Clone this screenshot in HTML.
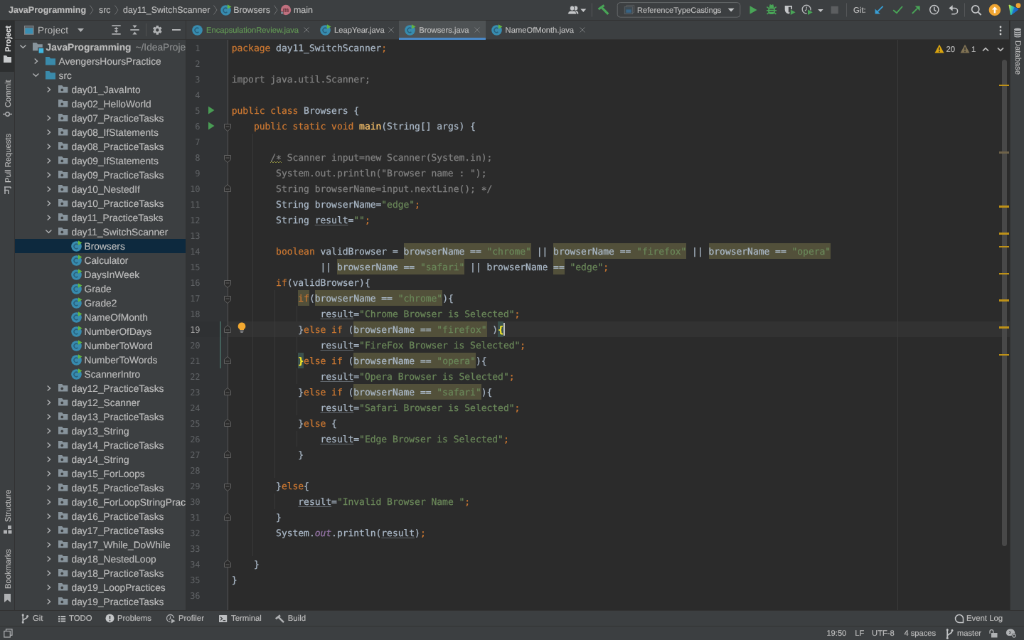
<!DOCTYPE html>
<html lang="en"><head><meta charset="utf-8"><title>JavaProgramming - Browsers.java</title>
<style>
*{box-sizing:border-box}
html,body{margin:0;padding:0;width:1024px;height:640px;overflow:hidden;background:#3c3f41}
#app{text-rendering:geometricPrecision;position:absolute;left:0;top:0;width:1440px;height:900px;transform:scale(0.711111);transform-origin:0 0;will-change:transform;background:#3c3f41;overflow:hidden;font-family:"Liberation Sans",sans-serif;font-size:13px;color:#bbbbbb}
.abs{position:absolute}
svg{position:absolute;overflow:visible}
.t{position:absolute;white-space:pre;line-height:1}
/* nav */
#nav{position:absolute;left:0;top:0;width:1440px;height:29px;background:#3c3f41;border-bottom:1px solid #323232}
.bc{-webkit-text-stroke:.18px;position:absolute;top:7px;font-size:12.4px;line-height:14px;white-space:pre;color:#bbbbbb}
.sepv{position:absolute;width:1px;background:#555555}
/* stripes */
#ls{position:absolute;left:0;top:28px;width:21px;height:830px;background:#3c3f41;border-right:1px solid #323232}
#rs{position:absolute;left:1419.5px;top:28px;width:21px;height:830px;background:#3c3f41;border-left:1px solid #323232}
.vt{position:absolute;white-space:pre;font-size:11.2px;line-height:12px;transform-origin:0 0;color:#bbbbbb;-webkit-text-stroke:0.15px}
/* project */
#proj{position:absolute;left:21px;top:28px;width:240px;height:830px;background:#3c3f41;overflow:hidden}
#projh{position:absolute;left:0;top:0;width:240px;height:28px}
.row{-webkit-text-stroke:.18px;position:absolute;left:0;width:240px;height:20px;white-space:pre;font-size:13.75px;line-height:20px;color:#bbbbbb}
.row .tx{position:absolute;top:1.1px}
/* editor */
#ed{position:absolute;left:261px;top:28px;width:1158.5px;height:830px;background:#2b2b2b;border-left:1px solid #323232;overflow:hidden}
#tabs{position:absolute;left:0;top:0;width:1157px;height:28px;background:#3c3f41;border-bottom:1px solid #323232}
.tab{-webkit-text-stroke:.18px;position:absolute;top:0.8px;height:28px;font-size:11.2px;line-height:28px;white-space:pre;color:#bbbbbb}
#gut{position:absolute;left:0;top:28px;width:58px;height:802px;background:#313335}
#foldline{position:absolute;left:58px;top:28px;width:1px;height:802px;background:#555555}
.ln{position:absolute;left:0;width:19.4px;text-align:right;font-family:"DejaVu Sans Mono","Liberation Mono",monospace;font-size:12px;letter-spacing:-0.1px;line-height:22px;height:22px;color:#606366;white-space:pre}
#code{position:absolute;left:63.7px;top:29.7px;font-family:"DejaVu Sans Mono","Liberation Mono",monospace;font-size:13px;letter-spacing:-0.027px;line-height:22px;color:#a9b7c6;white-space:pre;-webkit-text-stroke:0.25px}
.cl{position:absolute;left:0;height:22px;white-space:pre}
.ast{position:relative;top:2.2px}
.k{color:#cc7832}.s{color:#6a8759}.c{color:#808080}.m{color:#ffc66d}.f{color:#9876aa;font-style:italic}
.u{text-decoration:underline;text-decoration-thickness:1px;text-underline-offset:2.2px;text-decoration-color:rgba(169,183,198,.42)}
.w{background:#52503a;padding:4.9px 0 2px}
.br{background:#3b514d;color:#ffef28;font-weight:bold;padding:4.9px 0 2px}
/* bottom */
#bs{position:absolute;left:0;top:858px;width:1440px;height:22px;background:#3c3f41;border-top:1px solid #323232}
#st{position:absolute;left:0;top:880px;width:1440px;height:20px;background:#3c3f41;border-top:1px solid #323232}
.bt{-webkit-text-stroke:.18px;position:absolute;top:4px;font-size:11.35px;line-height:14px;white-space:pre;color:#bbbbbb}
.stt{-webkit-text-stroke:.18px;position:absolute;top:3.2px;font-size:11.15px;line-height:14px;white-space:pre;color:#bbbbbb}
</style></head>
<body>
<div id="app">
<div id="nav">
<span class="bc" style="left:12px;font-weight:bold;font-size:12.5px">JavaProgramming</span><svg style="left:125px;top:6px" width="8" height="16" viewBox="0 0 8 16"><path d="M1.5 1.5 L6 8 L1.5 14.5" fill="none" stroke="#6e7072" stroke-width="1"/></svg><span class="bc" style="left:139px">src</span><svg style="left:160px;top:6px" width="8" height="16" viewBox="0 0 8 16"><path d="M1.5 1.5 L6 8 L1.5 14.5" fill="none" stroke="#6e7072" stroke-width="1"/></svg><span class="bc" style="left:173px">day11_SwitchScanner</span><svg style="left:298.5px;top:6px" width="8" height="16" viewBox="0 0 8 16"><path d="M1.5 1.5 L6 8 L1.5 14.5" fill="none" stroke="#6e7072" stroke-width="1"/></svg><svg style="left:309.5px;top:5.5px" width="16" height="16" viewBox="0 0 16 16"><circle cx="7.5" cy="8.5" r="7.3" fill="#388caf"/><path d="M9.4 10.9 A3.2 3.2 0 1 1 9.4 6.1" fill="none" stroke="#29617d" stroke-width="1.5"/><path d="M9.9 0.3 L15.5 3.5 L9.9 6.7 Z" fill="#62b543"/></svg><span class="bc" style="left:328.3px">Browsers</span><svg style="left:384.3px;top:6px" width="8" height="16" viewBox="0 0 8 16"><path d="M1.5 1.5 L6 8 L1.5 14.5" fill="none" stroke="#6e7072" stroke-width="1"/></svg><svg style="left:393.7px;top:6px" width="16" height="16" viewBox="0 0 16 16"><circle cx="8" cy="8" r="7.2" fill="#c0707e"/><text x="8" y="11.3" font-family="Liberation Sans,sans-serif" font-size="9.5" font-weight="bold" text-anchor="middle" fill="#5a2f37">m</text><path d="M2.6 9.6 L5.2 12.2 L2.6 14.8 L0 12.2 Z" fill="#3c3f41"/><path d="M2.6 10.6 L4.2 12.2 L2.6 13.8 L1 12.2 Z" fill="#9fb4c4"/></svg><span class="bc" style="left:413px">main</span>
<svg style="left:0;top:0" width="1440" height="28" viewBox="0 0 1440 28"><g fill="#c4c6c8"><circle cx="809.3" cy="11.4" r="3"/><path d="M805 19.6 C805 16.6 806.5 15.3 809.3 15.3 C812 15.3 813.4 16.6 813.4 19.6 Z"/></g><g fill="#c4c6c8" stroke="#3c3f41" stroke-width="1"><path d="M798.6 20.1 C798.6 16.2 800.8 14.9 804.6 14.9 C808.4 14.9 810.6 16.2 810.6 20.1 Z"/><ellipse cx="804.6" cy="11.6" rx="3.3" ry="3.7"/></g><path d="M816.3 12.6 H824.3 L820.3 17 Z" fill="#c4c6c8"/><rect x="831.8" y="4.4" width="1" height="19.2" fill="#555759"/><path d="M841.6 13 L849.5 7.5" stroke="#49a557" stroke-width="3.2" fill="none"/><path d="M846 10.4 L855.3 19.8" stroke="#49a557" stroke-width="3.2" fill="none"/><rect x="868.2" y="3.6" width="172.6" height="20.6" rx="4" ry="4" fill="none" stroke="#646769" stroke-width="1"/><path d="M881 9 V7.4 H891.8 V17.4 H890.2" fill="none" stroke="#585c5f" stroke-width="1"/><rect x="878.3" y="9.6" width="11.4" height="10" fill="#3e4a52" stroke="#5a5f63" stroke-width="1"/><rect x="880.4" y="13.4" width="7.2" height="4.4" fill="#386485"/><path d="M1023.6 11.8 H1032.6 L1028.1 16.6 Z" fill="#c4c6c8"/><path d="M1054.5 8.3 L1064.6 14 L1054.5 19.7 Z" fill="#49a557"/><g fill="#49a557"><ellipse cx="1085" cy="9.3" rx="3.2" ry="2.6"/><rect x="1080.2" y="10" width="9.6" height="10" rx="3.6" ry="3.8"/></g><path d="M1078.4 9.6 L1081 11.6 M1091.6 9.6 L1089 11.6 M1078 14.8 H1081 M1092 14.8 H1089 M1078.6 19.8 L1081 17.8 M1091.4 19.8 L1089 17.8 M1082.6 6.4 L1083.6 7.6 M1087.4 6.4 L1086.4 7.6" stroke="#49a557" stroke-width="1.5" fill="none"/><path d="M1082 13.2 H1088 M1082 16.4 H1088" stroke="#3c3f41" stroke-width="1.3"/><path d="M1103.7 8 H1113.9 V13.4 C1113.9 16.6 1111.6 18.6 1108.8 19.6 C1106 18.6 1103.7 16.6 1103.7 13.4 Z" fill="#c4c6c8"/><path d="M1108.8 9.8 H1112.1 V13.4 C1112.1 15.4 1110.8 16.8 1108.8 17.6 Z" fill="#3c3f41"/><path d="M1110.4 11.6 L1120.4 17.2 L1110.4 22.8 Z" fill="#3c3f41"/><path d="M1111.8 13.6 L1118.6 17.3 L1111.8 21 Z" fill="#49a557"/><circle cx="1134.1" cy="13.1" r="5.9" fill="none" stroke="#b4b6b8" stroke-width="1.4"/><path d="M1134.3 9.4 V13.2 L1132 15.2" fill="none" stroke="#b4b6b8" stroke-width="1.3"/><path d="M1134.6 11.6 L1144.6 17.2 L1134.6 22.8 Z" fill="#3c3f41"/><path d="M1136 13.6 L1142.8 17.3 L1136 21 Z" fill="#49a557"/><path d="M1150.1 12.9 H1157.7 L1153.9 17 Z" fill="#c4c6c8"/><rect x="1168.7" y="8.8" width="10.1" height="10.5" fill="#5c5e60"/><rect x="1190" y="4.4" width="1" height="19.2" fill="#555759"/><path d="M1241.6 8.8 L1234 16.4" stroke="#389fd6" stroke-width="1.9" fill="none"/><path d="M1230.6 12.6 L1237.8 19.6 H1230.6 Z" fill="#389fd6"/><path d="M1256.2 14.2 L1261 18.2 L1269 9" stroke="#49a557" stroke-width="1.9" fill="none"/><path d="M1282.8 19 L1290 11.8" stroke="#49a557" stroke-width="1.9" fill="none"/><path d="M1286.6 8.4 H1293.6 V15.4 Z" fill="#49a557"/><circle cx="1313.8" cy="13.6" r="6.1" fill="none" stroke="#c4c6c8" stroke-width="1.5"/><path d="M1313.8 9.8 V13.8 L1316.6 16" fill="none" stroke="#c4c6c8" stroke-width="1.5"/><path d="M1337 11.4 H1342.4 A4.2 4.2 0 0 1 1342.4 19.8 H1338.2" fill="none" stroke="#c4c6c8" stroke-width="1.5"/><path d="M1334.4 11.4 L1339.6 7.2 V15.6 Z" fill="#c4c6c8"/><rect x="1356" y="4.4" width="1" height="19.2" fill="#555759"/><circle cx="1371.7" cy="13" r="5.1" fill="none" stroke="#c4c6c8" stroke-width="1.7"/><path d="M1375.6 17.1 L1379.6 21" stroke="#c4c6c8" stroke-width="2"/><circle cx="1398.9" cy="14" r="8.3" fill="#f0a532"/><path d="M1394.9 13.6 L1398.9 9.4 L1402.9 13.6 Z" fill="#fff"/><rect x="1397.7" y="13" width="2.4" height="5.4" fill="#fff"/><defs><linearGradient id="sg" x1="0" y1="0" x2="1" y2="0.25"><stop offset="0" stop-color="#d6e83c"/><stop offset="0.35" stop-color="#3fd0a0"/><stop offset="0.7" stop-color="#1f8fd8"/><stop offset="1" stop-color="#1b5fc8"/></linearGradient></defs><path d="M1418.6 7.6 Q1418.4 6.4 1419.8 6.8 L1431.6 12.2 Q1432.8 12.9 1431.8 13.8 L1422.6 20.8 Q1421.2 21.6 1420.8 20.2 Z" fill="url(#sg)"/><path d="M1426.5 10 L1431.6 12.2 Q1432.8 12.9 1431.8 13.8 L1422.6 20.8 Q1424.5 15 1426.5 10 Z" fill="#1a62c9" fill-opacity=".75"/><circle cx="1432" cy="7.7" r="3.4" fill="#f0a532"/></svg><span class="bc" style="left:896px;top:7.9px;font-size:11.1px">ReferenceTypeCastings</span><span class="bc" style="left:1200px;top:7.7px;font-size:11.4px">Git:</span></div>
<div id="ls">
<div class="abs" style="left:0;top:0;width:20px;height:73px;background:#2d2f30"></div><span class="vt" style="left:5.6px;top:44.5px;transform:rotate(-90deg);font-weight:bold;font-size:10.9px;color:#e0e0e0">Project</span><svg style="left:4px;top:49px" width="13" height="12" viewBox="0 0 13 12"><path d="M1 1 H5 L6.5 3 H12 V11 H1 Z" fill="#c7c9cb"/></svg><span class="vt" style="left:5.6px;top:123px;transform:rotate(-90deg);color:#bbbbbb">Commit</span><svg style="left:4px;top:126px" width="13" height="13" viewBox="0 0 13 13"><circle cx="6.5" cy="6.5" r="2.8" fill="none" stroke="#afb1b3" stroke-width="1.4"/><path d="M0 6.5 H3.5 M9.5 6.5 H13" stroke="#afb1b3" stroke-width="1.4"/></svg><span class="vt" style="left:5.6px;top:229px;transform:rotate(-90deg);color:#bbbbbb">Pull Requests</span><svg style="left:4px;top:233px" width="13" height="13" viewBox="0 0 13 13"><path d="M2 2 H11 M2 6.5 H8 M3 2 V12 M8 6.5 V12 M11 2 V4" stroke="#afb1b3" stroke-width="1.5" fill="none"/></svg><span class="vt" style="left:5.6px;top:706px;transform:rotate(-90deg);color:#bbbbbb">Structure</span><svg style="left:4px;top:710px" width="13" height="13" viewBox="0 0 13 13"><rect x="7" y="1" width="5" height="5" fill="#afb1b3"/><rect x="1" y="7.5" width="5" height="5" fill="#afb1b3"/><rect x="7.5" y="7.5" width="5" height="5" fill="#afb1b3"/></svg><span class="vt" style="left:5.6px;top:800px;transform:rotate(-90deg);color:#bbbbbb">Bookmarks</span><svg style="left:4px;top:806px" width="13" height="14" viewBox="0 0 13 14"><path d="M2 1 H11 V13 L6.5 9.5 L2 13 Z" fill="#afb1b3"/></svg></div>
<div id="rs">
<svg style="left:4.5px;top:11px" width="12" height="14" viewBox="0 0 12 14"><ellipse cx="6" cy="2.5" rx="5" ry="2" fill="#afb1b3"/><path d="M1 4.2 C1 6.8 11 6.8 11 4.2 V6 C11 8.6 1 8.6 1 6 Z M1 7.2 C1 9.8 11 9.8 11 7.2 V9 C11 11.6 1 11.6 1 9 Z M1 10.2 C1 12.8 11 12.8 11 10.2 V11.5 C11 14.2 1 14.2 1 11.5 Z" fill="#afb1b3"/></svg><span class="vt" style="left:16.5px;top:29px;transform:rotate(90deg);color:#bbbbbb">Database</span></div>
<div id="proj">
<div id="projh"><svg style="left:13.2px;top:8.2px" width="13.6" height="12.8" viewBox="0 0 13.6 12.8"><rect x="0" y="0" width="13.6" height="12.8" fill="#7f8589"/><rect x="1" y="1" width="11.6" height="2.2" fill="#5a6065"/><rect x="1.3" y="3.6" width="11" height="7.9" fill="#3a8fb3"/></svg><span class="t" style="left:32px;top:7px;font-size:13.6px;line-height:15px;letter-spacing:.12px">Project</span><svg style="left:88px;top:12px" width="9" height="6" viewBox="0 0 9 6"><path d="M0 0 H9 L4.5 5 Z" fill="#afb1b3"/></svg><svg style="left:135.6px;top:7.1px" width="13" height="14" viewBox="0 0 13 14"><g fill="#afb1b3"><rect x=".3" y=".3" width="12.4" height="1.7"/><rect x=".3" y="12" width="12.4" height="1.7"/><path d="M6.5 2.9 L9.7 6 H3.3 Z M3.3 8 H9.7 L6.5 11.1 Z"/><rect x="5.8" y="5.8" width="1.4" height="2.4"/></g></svg><svg style="left:161.6px;top:7.1px" width="13" height="14" viewBox="0 0 13 14"><g fill="#afb1b3"><rect x=".3" y="6.15" width="12.4" height="1.7"/><path d="M3.4 .6 H9.6 L6.5 4.5 Z M6.5 9.5 L9.6 13.4 H3.4 Z"/></g></svg><div class="sepv" style="left:184px;top:5px;height:18px;background:#515151"></div><svg style="left:193.2px;top:6.8px" width="14.6" height="14.6" viewBox="0 0 16 16"><g fill="#afb1b3"><circle cx="8" cy="8" r="5.2"/><g><rect x="6.1" y="1" width="3.8" height="14" rx=".5"/><rect x="6.1" y="1" width="3.8" height="14" rx=".5" transform="rotate(60 8 8)"/><rect x="6.1" y="1" width="3.8" height="14" rx=".5" transform="rotate(120 8 8)"/></g></g><circle cx="8" cy="8" r="2.4" fill="#3c3f41"/></svg><div class="abs" style="left:0;top:26.9px;width:240px;height:1px;background:#323232"></div><div class="abs" style="left:220.6px;top:13px;width:12.4px;height:2px;background:#afb1b3"></div></div>
<div class="row" style="top:28.1px;"><svg style="left:7.1px;top:7.0px" width="8.8" height="4.8" viewBox="0 0 8.8 4.8"><path d="M.4 .5 L4.4 4.2 L8.4 .5" fill="none" stroke="#afb1b3" stroke-width="1.4"/></svg><svg style="left:25.2px;top:3.9px" width="16" height="15" viewBox="0 0 16 15"><path d="M0 0 H5.4 L7.2 2.2 H13.8 V11.2 H0 Z" fill="#87939b"/><rect x="7.4" y="6.6" width="8.6" height="8.4" fill="#3c3f41"/><rect x="8.6" y="7.8" width="6.6" height="6.8" fill="#40b6e0"/></svg><span class="tx" style="left:43.5px;font-weight:bold">JavaProgramming</span><span class="tx" style="left:169.5px;color:#8a8c8d">~/IdeaProjects/JavaProgramming</span></div>
<div class="row" style="top:48.1px;"><svg style="left:26.8px;top:5.8px" width="5.4" height="8" viewBox="0 0 5.4 8"><path d="M.7 .4 L4.6 4 L.7 7.6" fill="none" stroke="#afb1b3" stroke-width="1.4"/></svg><svg style="left:42.8px;top:3.7px" width="14" height="11.6" viewBox="0 0 14 11.6"><path d="M0 0 H5.4 L7.2 2.2 H14 V11.6 H0 Z" fill="#3a8aaa"/></svg><span class="tx" style="left:61.5px">AvengersHoursPractice</span></div>
<div class="row" style="top:68.1px;"><svg style="left:25.1px;top:7.0px" width="8.8" height="4.8" viewBox="0 0 8.8 4.8"><path d="M.4 .5 L4.4 4.2 L8.4 .5" fill="none" stroke="#afb1b3" stroke-width="1.4"/></svg><svg style="left:42.8px;top:3.7px" width="14" height="11.6" viewBox="0 0 14 11.6"><path d="M0 0 H5.4 L7.2 2.2 H14 V11.6 H0 Z" fill="#3a8aaa"/></svg><span class="tx" style="left:61.5px">src</span></div>
<div class="row" style="top:88.1px;"><svg style="left:44.8px;top:5.8px" width="5.4" height="8" viewBox="0 0 5.4 8"><path d="M.7 .4 L4.6 4 L.7 7.6" fill="none" stroke="#afb1b3" stroke-width="1.4"/></svg><svg style="left:61.1px;top:4.0px" width="13.4" height="10.6" viewBox="0 0 13.4 10.6"><path d="M0 0 H5.2 L6.9 2 H13.4 V10.6 H0 Z" fill="#87939b"/><circle cx="5.3" cy="6.4" r="1.9" fill="#3c3f41"/></svg><span class="tx" style="left:79.5px">day01_JavaInto</span></div>
<div class="row" style="top:108.1px;"><svg style="left:61.1px;top:4.0px" width="13.4" height="10.6" viewBox="0 0 13.4 10.6"><path d="M0 0 H5.2 L6.9 2 H13.4 V10.6 H0 Z" fill="#87939b"/><circle cx="5.3" cy="6.4" r="1.9" fill="#3c3f41"/></svg><span class="tx" style="left:79.5px">day02_HelloWorld</span></div>
<div class="row" style="top:128.1px;"><svg style="left:44.8px;top:5.8px" width="5.4" height="8" viewBox="0 0 5.4 8"><path d="M.7 .4 L4.6 4 L.7 7.6" fill="none" stroke="#afb1b3" stroke-width="1.4"/></svg><svg style="left:61.1px;top:4.0px" width="13.4" height="10.6" viewBox="0 0 13.4 10.6"><path d="M0 0 H5.2 L6.9 2 H13.4 V10.6 H0 Z" fill="#87939b"/><circle cx="5.3" cy="6.4" r="1.9" fill="#3c3f41"/></svg><span class="tx" style="left:79.5px">day07_PracticeTasks</span></div>
<div class="row" style="top:148.1px;"><svg style="left:44.8px;top:5.8px" width="5.4" height="8" viewBox="0 0 5.4 8"><path d="M.7 .4 L4.6 4 L.7 7.6" fill="none" stroke="#afb1b3" stroke-width="1.4"/></svg><svg style="left:61.1px;top:4.0px" width="13.4" height="10.6" viewBox="0 0 13.4 10.6"><path d="M0 0 H5.2 L6.9 2 H13.4 V10.6 H0 Z" fill="#87939b"/><circle cx="5.3" cy="6.4" r="1.9" fill="#3c3f41"/></svg><span class="tx" style="left:79.5px">day08_IfStatements</span></div>
<div class="row" style="top:168.1px;"><svg style="left:44.8px;top:5.8px" width="5.4" height="8" viewBox="0 0 5.4 8"><path d="M.7 .4 L4.6 4 L.7 7.6" fill="none" stroke="#afb1b3" stroke-width="1.4"/></svg><svg style="left:61.1px;top:4.0px" width="13.4" height="10.6" viewBox="0 0 13.4 10.6"><path d="M0 0 H5.2 L6.9 2 H13.4 V10.6 H0 Z" fill="#87939b"/><circle cx="5.3" cy="6.4" r="1.9" fill="#3c3f41"/></svg><span class="tx" style="left:79.5px">day08_PracticeTasks</span></div>
<div class="row" style="top:188.1px;"><svg style="left:44.8px;top:5.8px" width="5.4" height="8" viewBox="0 0 5.4 8"><path d="M.7 .4 L4.6 4 L.7 7.6" fill="none" stroke="#afb1b3" stroke-width="1.4"/></svg><svg style="left:61.1px;top:4.0px" width="13.4" height="10.6" viewBox="0 0 13.4 10.6"><path d="M0 0 H5.2 L6.9 2 H13.4 V10.6 H0 Z" fill="#87939b"/><circle cx="5.3" cy="6.4" r="1.9" fill="#3c3f41"/></svg><span class="tx" style="left:79.5px">day09_IfStatements</span></div>
<div class="row" style="top:208.1px;"><svg style="left:44.8px;top:5.8px" width="5.4" height="8" viewBox="0 0 5.4 8"><path d="M.7 .4 L4.6 4 L.7 7.6" fill="none" stroke="#afb1b3" stroke-width="1.4"/></svg><svg style="left:61.1px;top:4.0px" width="13.4" height="10.6" viewBox="0 0 13.4 10.6"><path d="M0 0 H5.2 L6.9 2 H13.4 V10.6 H0 Z" fill="#87939b"/><circle cx="5.3" cy="6.4" r="1.9" fill="#3c3f41"/></svg><span class="tx" style="left:79.5px">day09_PracticeTasks</span></div>
<div class="row" style="top:228.1px;"><svg style="left:44.8px;top:5.8px" width="5.4" height="8" viewBox="0 0 5.4 8"><path d="M.7 .4 L4.6 4 L.7 7.6" fill="none" stroke="#afb1b3" stroke-width="1.4"/></svg><svg style="left:61.1px;top:4.0px" width="13.4" height="10.6" viewBox="0 0 13.4 10.6"><path d="M0 0 H5.2 L6.9 2 H13.4 V10.6 H0 Z" fill="#87939b"/><circle cx="5.3" cy="6.4" r="1.9" fill="#3c3f41"/></svg><span class="tx" style="left:79.5px">day10_NestedIf</span></div>
<div class="row" style="top:248.1px;"><svg style="left:44.8px;top:5.8px" width="5.4" height="8" viewBox="0 0 5.4 8"><path d="M.7 .4 L4.6 4 L.7 7.6" fill="none" stroke="#afb1b3" stroke-width="1.4"/></svg><svg style="left:61.1px;top:4.0px" width="13.4" height="10.6" viewBox="0 0 13.4 10.6"><path d="M0 0 H5.2 L6.9 2 H13.4 V10.6 H0 Z" fill="#87939b"/><circle cx="5.3" cy="6.4" r="1.9" fill="#3c3f41"/></svg><span class="tx" style="left:79.5px">day10_PracticeTasks</span></div>
<div class="row" style="top:268.1px;"><svg style="left:44.8px;top:5.8px" width="5.4" height="8" viewBox="0 0 5.4 8"><path d="M.7 .4 L4.6 4 L.7 7.6" fill="none" stroke="#afb1b3" stroke-width="1.4"/></svg><svg style="left:61.1px;top:4.0px" width="13.4" height="10.6" viewBox="0 0 13.4 10.6"><path d="M0 0 H5.2 L6.9 2 H13.4 V10.6 H0 Z" fill="#87939b"/><circle cx="5.3" cy="6.4" r="1.9" fill="#3c3f41"/></svg><span class="tx" style="left:79.5px">day11_PracticeTasks</span></div>
<div class="row" style="top:288.1px;"><svg style="left:43.1px;top:7.0px" width="8.8" height="4.8" viewBox="0 0 8.8 4.8"><path d="M.4 .5 L4.4 4.2 L8.4 .5" fill="none" stroke="#afb1b3" stroke-width="1.4"/></svg><svg style="left:61.1px;top:4.0px" width="13.4" height="10.6" viewBox="0 0 13.4 10.6"><path d="M0 0 H5.2 L6.9 2 H13.4 V10.6 H0 Z" fill="#87939b"/><circle cx="5.3" cy="6.4" r="1.9" fill="#3c3f41"/></svg><span class="tx" style="left:79.5px">day11_SwitchScanner</span></div>
<div class="row" style="top:308.1px;background:#0d293e;"><svg style="left:78.5px;top:1.6px" width="16" height="16" viewBox="0 0 16 16"><circle cx="7.5" cy="8.5" r="7.3" fill="#388caf"/><path d="M9.4 10.9 A3.2 3.2 0 1 1 9.4 6.1" fill="none" stroke="#29617d" stroke-width="1.5"/><path d="M9.9 0.3 L15.5 3.5 L9.9 6.7 Z" fill="#62b543"/></svg><span class="tx" style="left:97.5px">Browsers</span></div>
<div class="row" style="top:328.1px;"><svg style="left:78.5px;top:1.6px" width="16" height="16" viewBox="0 0 16 16"><circle cx="7.5" cy="8.5" r="7.3" fill="#388caf"/><path d="M9.4 10.9 A3.2 3.2 0 1 1 9.4 6.1" fill="none" stroke="#29617d" stroke-width="1.5"/><path d="M9.9 0.3 L15.5 3.5 L9.9 6.7 Z" fill="#62b543"/></svg><span class="tx" style="left:97.5px">Calculator</span></div>
<div class="row" style="top:348.1px;"><svg style="left:78.5px;top:1.6px" width="16" height="16" viewBox="0 0 16 16"><circle cx="7.5" cy="8.5" r="7.3" fill="#388caf"/><path d="M9.4 10.9 A3.2 3.2 0 1 1 9.4 6.1" fill="none" stroke="#29617d" stroke-width="1.5"/><path d="M9.9 0.3 L15.5 3.5 L9.9 6.7 Z" fill="#62b543"/></svg><span class="tx" style="left:97.5px">DaysInWeek</span></div>
<div class="row" style="top:368.1px;"><svg style="left:78.5px;top:1.6px" width="16" height="16" viewBox="0 0 16 16"><circle cx="7.5" cy="8.5" r="7.3" fill="#388caf"/><path d="M9.4 10.9 A3.2 3.2 0 1 1 9.4 6.1" fill="none" stroke="#29617d" stroke-width="1.5"/><path d="M9.9 0.3 L15.5 3.5 L9.9 6.7 Z" fill="#62b543"/></svg><span class="tx" style="left:97.5px">Grade</span></div>
<div class="row" style="top:388.1px;"><svg style="left:78.5px;top:1.6px" width="16" height="16" viewBox="0 0 16 16"><circle cx="7.5" cy="8.5" r="7.3" fill="#388caf"/><path d="M9.4 10.9 A3.2 3.2 0 1 1 9.4 6.1" fill="none" stroke="#29617d" stroke-width="1.5"/><path d="M9.9 0.3 L15.5 3.5 L9.9 6.7 Z" fill="#62b543"/></svg><span class="tx" style="left:97.5px">Grade2</span></div>
<div class="row" style="top:408.1px;"><svg style="left:78.5px;top:1.6px" width="16" height="16" viewBox="0 0 16 16"><circle cx="7.5" cy="8.5" r="7.3" fill="#388caf"/><path d="M9.4 10.9 A3.2 3.2 0 1 1 9.4 6.1" fill="none" stroke="#29617d" stroke-width="1.5"/><path d="M9.9 0.3 L15.5 3.5 L9.9 6.7 Z" fill="#62b543"/></svg><span class="tx" style="left:97.5px">NameOfMonth</span></div>
<div class="row" style="top:428.1px;"><svg style="left:78.5px;top:1.6px" width="16" height="16" viewBox="0 0 16 16"><circle cx="7.5" cy="8.5" r="7.3" fill="#388caf"/><path d="M9.4 10.9 A3.2 3.2 0 1 1 9.4 6.1" fill="none" stroke="#29617d" stroke-width="1.5"/><path d="M9.9 0.3 L15.5 3.5 L9.9 6.7 Z" fill="#62b543"/></svg><span class="tx" style="left:97.5px">NumberOfDays</span></div>
<div class="row" style="top:448.1px;"><svg style="left:78.5px;top:1.6px" width="16" height="16" viewBox="0 0 16 16"><circle cx="7.5" cy="8.5" r="7.3" fill="#388caf"/><path d="M9.4 10.9 A3.2 3.2 0 1 1 9.4 6.1" fill="none" stroke="#29617d" stroke-width="1.5"/><path d="M9.9 0.3 L15.5 3.5 L9.9 6.7 Z" fill="#62b543"/></svg><span class="tx" style="left:97.5px">NumberToWord</span></div>
<div class="row" style="top:468.1px;"><svg style="left:78.5px;top:1.6px" width="16" height="16" viewBox="0 0 16 16"><circle cx="7.5" cy="8.5" r="7.3" fill="#388caf"/><path d="M9.4 10.9 A3.2 3.2 0 1 1 9.4 6.1" fill="none" stroke="#29617d" stroke-width="1.5"/><path d="M9.9 0.3 L15.5 3.5 L9.9 6.7 Z" fill="#62b543"/></svg><span class="tx" style="left:97.5px">NumberToWords</span></div>
<div class="row" style="top:488.1px;"><svg style="left:78.5px;top:1.6px" width="16" height="16" viewBox="0 0 16 16"><circle cx="7.5" cy="8.5" r="7.3" fill="#388caf"/><path d="M9.4 10.9 A3.2 3.2 0 1 1 9.4 6.1" fill="none" stroke="#29617d" stroke-width="1.5"/><path d="M9.9 0.3 L15.5 3.5 L9.9 6.7 Z" fill="#62b543"/></svg><span class="tx" style="left:97.5px">ScannerIntro</span></div>
<div class="row" style="top:508.1px;"><svg style="left:44.8px;top:5.8px" width="5.4" height="8" viewBox="0 0 5.4 8"><path d="M.7 .4 L4.6 4 L.7 7.6" fill="none" stroke="#afb1b3" stroke-width="1.4"/></svg><svg style="left:61.1px;top:4.0px" width="13.4" height="10.6" viewBox="0 0 13.4 10.6"><path d="M0 0 H5.2 L6.9 2 H13.4 V10.6 H0 Z" fill="#87939b"/><circle cx="5.3" cy="6.4" r="1.9" fill="#3c3f41"/></svg><span class="tx" style="left:79.5px">day12_PracticeTasks</span></div>
<div class="row" style="top:528.1px;"><svg style="left:44.8px;top:5.8px" width="5.4" height="8" viewBox="0 0 5.4 8"><path d="M.7 .4 L4.6 4 L.7 7.6" fill="none" stroke="#afb1b3" stroke-width="1.4"/></svg><svg style="left:61.1px;top:4.0px" width="13.4" height="10.6" viewBox="0 0 13.4 10.6"><path d="M0 0 H5.2 L6.9 2 H13.4 V10.6 H0 Z" fill="#87939b"/><circle cx="5.3" cy="6.4" r="1.9" fill="#3c3f41"/></svg><span class="tx" style="left:79.5px">day12_Scanner</span></div>
<div class="row" style="top:548.1px;"><svg style="left:44.8px;top:5.8px" width="5.4" height="8" viewBox="0 0 5.4 8"><path d="M.7 .4 L4.6 4 L.7 7.6" fill="none" stroke="#afb1b3" stroke-width="1.4"/></svg><svg style="left:61.1px;top:4.0px" width="13.4" height="10.6" viewBox="0 0 13.4 10.6"><path d="M0 0 H5.2 L6.9 2 H13.4 V10.6 H0 Z" fill="#87939b"/><circle cx="5.3" cy="6.4" r="1.9" fill="#3c3f41"/></svg><span class="tx" style="left:79.5px">day13_PracticeTasks</span></div>
<div class="row" style="top:568.1px;"><svg style="left:44.8px;top:5.8px" width="5.4" height="8" viewBox="0 0 5.4 8"><path d="M.7 .4 L4.6 4 L.7 7.6" fill="none" stroke="#afb1b3" stroke-width="1.4"/></svg><svg style="left:61.1px;top:4.0px" width="13.4" height="10.6" viewBox="0 0 13.4 10.6"><path d="M0 0 H5.2 L6.9 2 H13.4 V10.6 H0 Z" fill="#87939b"/><circle cx="5.3" cy="6.4" r="1.9" fill="#3c3f41"/></svg><span class="tx" style="left:79.5px">day13_String</span></div>
<div class="row" style="top:588.1px;"><svg style="left:44.8px;top:5.8px" width="5.4" height="8" viewBox="0 0 5.4 8"><path d="M.7 .4 L4.6 4 L.7 7.6" fill="none" stroke="#afb1b3" stroke-width="1.4"/></svg><svg style="left:61.1px;top:4.0px" width="13.4" height="10.6" viewBox="0 0 13.4 10.6"><path d="M0 0 H5.2 L6.9 2 H13.4 V10.6 H0 Z" fill="#87939b"/><circle cx="5.3" cy="6.4" r="1.9" fill="#3c3f41"/></svg><span class="tx" style="left:79.5px">day14_PracticeTasks</span></div>
<div class="row" style="top:608.1px;"><svg style="left:44.8px;top:5.8px" width="5.4" height="8" viewBox="0 0 5.4 8"><path d="M.7 .4 L4.6 4 L.7 7.6" fill="none" stroke="#afb1b3" stroke-width="1.4"/></svg><svg style="left:61.1px;top:4.0px" width="13.4" height="10.6" viewBox="0 0 13.4 10.6"><path d="M0 0 H5.2 L6.9 2 H13.4 V10.6 H0 Z" fill="#87939b"/><circle cx="5.3" cy="6.4" r="1.9" fill="#3c3f41"/></svg><span class="tx" style="left:79.5px">day14_String</span></div>
<div class="row" style="top:628.1px;"><svg style="left:44.8px;top:5.8px" width="5.4" height="8" viewBox="0 0 5.4 8"><path d="M.7 .4 L4.6 4 L.7 7.6" fill="none" stroke="#afb1b3" stroke-width="1.4"/></svg><svg style="left:61.1px;top:4.0px" width="13.4" height="10.6" viewBox="0 0 13.4 10.6"><path d="M0 0 H5.2 L6.9 2 H13.4 V10.6 H0 Z" fill="#87939b"/><circle cx="5.3" cy="6.4" r="1.9" fill="#3c3f41"/></svg><span class="tx" style="left:79.5px">day15_ForLoops</span></div>
<div class="row" style="top:648.1px;"><svg style="left:44.8px;top:5.8px" width="5.4" height="8" viewBox="0 0 5.4 8"><path d="M.7 .4 L4.6 4 L.7 7.6" fill="none" stroke="#afb1b3" stroke-width="1.4"/></svg><svg style="left:61.1px;top:4.0px" width="13.4" height="10.6" viewBox="0 0 13.4 10.6"><path d="M0 0 H5.2 L6.9 2 H13.4 V10.6 H0 Z" fill="#87939b"/><circle cx="5.3" cy="6.4" r="1.9" fill="#3c3f41"/></svg><span class="tx" style="left:79.5px">day15_PracticeTasks</span></div>
<div class="row" style="top:668.1px;"><svg style="left:44.8px;top:5.8px" width="5.4" height="8" viewBox="0 0 5.4 8"><path d="M.7 .4 L4.6 4 L.7 7.6" fill="none" stroke="#afb1b3" stroke-width="1.4"/></svg><svg style="left:61.1px;top:4.0px" width="13.4" height="10.6" viewBox="0 0 13.4 10.6"><path d="M0 0 H5.2 L6.9 2 H13.4 V10.6 H0 Z" fill="#87939b"/><circle cx="5.3" cy="6.4" r="1.9" fill="#3c3f41"/></svg><span class="tx" style="left:79.5px">day16_ForLoopStringPractice</span></div>
<div class="row" style="top:688.1px;"><svg style="left:44.8px;top:5.8px" width="5.4" height="8" viewBox="0 0 5.4 8"><path d="M.7 .4 L4.6 4 L.7 7.6" fill="none" stroke="#afb1b3" stroke-width="1.4"/></svg><svg style="left:61.1px;top:4.0px" width="13.4" height="10.6" viewBox="0 0 13.4 10.6"><path d="M0 0 H5.2 L6.9 2 H13.4 V10.6 H0 Z" fill="#87939b"/><circle cx="5.3" cy="6.4" r="1.9" fill="#3c3f41"/></svg><span class="tx" style="left:79.5px">day16_PracticeTasks</span></div>
<div class="row" style="top:708.1px;"><svg style="left:44.8px;top:5.8px" width="5.4" height="8" viewBox="0 0 5.4 8"><path d="M.7 .4 L4.6 4 L.7 7.6" fill="none" stroke="#afb1b3" stroke-width="1.4"/></svg><svg style="left:61.1px;top:4.0px" width="13.4" height="10.6" viewBox="0 0 13.4 10.6"><path d="M0 0 H5.2 L6.9 2 H13.4 V10.6 H0 Z" fill="#87939b"/><circle cx="5.3" cy="6.4" r="1.9" fill="#3c3f41"/></svg><span class="tx" style="left:79.5px">day17_PracticeTasks</span></div>
<div class="row" style="top:728.1px;"><svg style="left:44.8px;top:5.8px" width="5.4" height="8" viewBox="0 0 5.4 8"><path d="M.7 .4 L4.6 4 L.7 7.6" fill="none" stroke="#afb1b3" stroke-width="1.4"/></svg><svg style="left:61.1px;top:4.0px" width="13.4" height="10.6" viewBox="0 0 13.4 10.6"><path d="M0 0 H5.2 L6.9 2 H13.4 V10.6 H0 Z" fill="#87939b"/><circle cx="5.3" cy="6.4" r="1.9" fill="#3c3f41"/></svg><span class="tx" style="left:79.5px">day17_While_DoWhile</span></div>
<div class="row" style="top:748.1px;"><svg style="left:44.8px;top:5.8px" width="5.4" height="8" viewBox="0 0 5.4 8"><path d="M.7 .4 L4.6 4 L.7 7.6" fill="none" stroke="#afb1b3" stroke-width="1.4"/></svg><svg style="left:61.1px;top:4.0px" width="13.4" height="10.6" viewBox="0 0 13.4 10.6"><path d="M0 0 H5.2 L6.9 2 H13.4 V10.6 H0 Z" fill="#87939b"/><circle cx="5.3" cy="6.4" r="1.9" fill="#3c3f41"/></svg><span class="tx" style="left:79.5px">day18_NestedLoop</span></div>
<div class="row" style="top:768.1px;"><svg style="left:44.8px;top:5.8px" width="5.4" height="8" viewBox="0 0 5.4 8"><path d="M.7 .4 L4.6 4 L.7 7.6" fill="none" stroke="#afb1b3" stroke-width="1.4"/></svg><svg style="left:61.1px;top:4.0px" width="13.4" height="10.6" viewBox="0 0 13.4 10.6"><path d="M0 0 H5.2 L6.9 2 H13.4 V10.6 H0 Z" fill="#87939b"/><circle cx="5.3" cy="6.4" r="1.9" fill="#3c3f41"/></svg><span class="tx" style="left:79.5px">day18_PracticeTasks</span></div>
<div class="row" style="top:788.1px;"><svg style="left:44.8px;top:5.8px" width="5.4" height="8" viewBox="0 0 5.4 8"><path d="M.7 .4 L4.6 4 L.7 7.6" fill="none" stroke="#afb1b3" stroke-width="1.4"/></svg><svg style="left:61.1px;top:4.0px" width="13.4" height="10.6" viewBox="0 0 13.4 10.6"><path d="M0 0 H5.2 L6.9 2 H13.4 V10.6 H0 Z" fill="#87939b"/><circle cx="5.3" cy="6.4" r="1.9" fill="#3c3f41"/></svg><span class="tx" style="left:79.5px">day19_LoopPractices</span></div>
<div class="row" style="top:808.1px;"><svg style="left:44.8px;top:5.8px" width="5.4" height="8" viewBox="0 0 5.4 8"><path d="M.7 .4 L4.6 4 L.7 7.6" fill="none" stroke="#afb1b3" stroke-width="1.4"/></svg><svg style="left:61.1px;top:4.0px" width="13.4" height="10.6" viewBox="0 0 13.4 10.6"><path d="M0 0 H5.2 L6.9 2 H13.4 V10.6 H0 Z" fill="#87939b"/><circle cx="5.3" cy="6.4" r="1.9" fill="#3c3f41"/></svg><span class="tx" style="left:79.5px">day19_PracticeTasks</span></div>
</div>
<div id="ed">
<div id="tabs"><svg style="left:8.1px;top:5.5px" width="16" height="16" viewBox="0 0 16 16"><circle cx="7.5" cy="8.5" r="7.3" fill="#388caf"/><path d="M9.4 10.9 A3.2 3.2 0 1 1 9.4 6.1" fill="none" stroke="#29617d" stroke-width="1.5"/></svg><span class="tab" style="left:28px;color:#629755">EncapsulationReview.java</span><svg style="left:164.7px;top:10px" width="8" height="8" viewBox="0 0 8 8"><path d="M.5 .5 L7.5 7.5 M7.5 .5 L.5 7.5" stroke="#7a7d7f" stroke-width="1"/></svg><svg style="left:188.2px;top:5.5px" width="16" height="16" viewBox="0 0 16 16"><circle cx="7.5" cy="8.5" r="7.3" fill="#388caf"/><path d="M9.4 10.9 A3.2 3.2 0 1 1 9.4 6.1" fill="none" stroke="#29617d" stroke-width="1.5"/><path d="M9.9 0.3 L15.5 3.5 L9.9 6.7 Z" fill="#62b543"/></svg><span class="tab" style="left:208.1px;color:#bbbbbb">LeapYear.java</span><svg style="left:284.4px;top:10px" width="8" height="8" viewBox="0 0 8 8"><path d="M.5 .5 L7.5 7.5 M7.5 .5 L.5 7.5" stroke="#7a7d7f" stroke-width="1"/></svg><div class="abs" style="left:298.8px;top:0;width:122.39999999999998px;height:27px;background:#4e5254"></div><div class="abs" style="left:298.8px;top:24.7px;width:122.39999999999998px;height:3.3px;background:#4a88c7"></div><svg style="left:307.0px;top:5.5px" width="16" height="16" viewBox="0 0 16 16"><circle cx="7.5" cy="8.5" r="7.3" fill="#388caf"/><path d="M9.4 10.9 A3.2 3.2 0 1 1 9.4 6.1" fill="none" stroke="#29617d" stroke-width="1.5"/><path d="M9.9 0.3 L15.5 3.5 L9.9 6.7 Z" fill="#62b543"/></svg><span class="tab" style="left:327.2px;color:#bbbbbb">Browsers.java</span><svg style="left:405.3px;top:10px" width="8" height="8" viewBox="0 0 8 8"><path d="M.5 .5 L7.5 7.5 M7.5 .5 L.5 7.5" stroke="#7a7d7f" stroke-width="1"/></svg><svg style="left:429.4px;top:5.5px" width="16" height="16" viewBox="0 0 16 16"><circle cx="7.5" cy="8.5" r="7.3" fill="#388caf"/><path d="M9.4 10.9 A3.2 3.2 0 1 1 9.4 6.1" fill="none" stroke="#29617d" stroke-width="1.5"/><path d="M9.9 0.3 L15.5 3.5 L9.9 6.7 Z" fill="#62b543"/></svg><span class="tab" style="left:448.6px;color:#bbbbbb">NameOfMonth.java</span><svg style="left:552.7px;top:10px" width="8" height="8" viewBox="0 0 8 8"><path d="M.5 .5 L7.5 7.5 M7.5 .5 L.5 7.5" stroke="#7a7d7f" stroke-width="1"/></svg><svg style="left:1142.5px;top:8px" width="4" height="14" viewBox="0 0 4 14"><circle cx="2" cy="2" r="1.4" fill="#d0d2d3"/><circle cx="2" cy="7" r="1.4" fill="#d0d2d3"/><circle cx="2" cy="12" r="1.4" fill="#d0d2d3"/></svg></div>
<div class="abs" style="left:0;top:423.5px;width:1160px;height:22px;background:#323232"></div><div id="gut"></div><div class="abs" style="left:0;top:423.5px;width:58px;height:22px;background:#2f3133"></div><div id="foldline"></div><div class="abs" style="left:1000.0px;top:28px;width:1px;height:802px;background:#3b3b3b"></div><div class="abs" style="left:92.7px;top:159.5px;width:1px;height:594px;background:#393939"></div><div class="abs" style="left:123.9px;top:379.5px;width:1px;height:264px;background:#393939"></div><div class="abs" style="left:123.9px;top:665.5px;width:1px;height:22px;background:#393939"></div><div class="abs" style="left:155.1px;top:401.5px;width:1px;height:22px;background:#393939"></div><div class="abs" style="left:155.1px;top:445.5px;width:1px;height:22px;background:#393939"></div><div class="abs" style="left:155.1px;top:489.5px;width:1px;height:22px;background:#393939"></div><div class="abs" style="left:155.1px;top:533.5px;width:1px;height:22px;background:#393939"></div><div class="abs" style="left:155.1px;top:577.5px;width:1px;height:22px;background:#393939"></div>
<div class="abs" style="left:47px;top:423.5px;width:2px;height:66px;background:#43615b"></div><span class="ln" style="top:29.4px;">1</span><span class="ln" style="top:51.4px;">2</span><span class="ln" style="top:73.4px;">3</span><span class="ln" style="top:95.4px;">4</span><span class="ln" style="top:117.4px;">5</span><span class="ln" style="top:139.4px;">6</span><span class="ln" style="top:161.4px;">7</span><span class="ln" style="top:183.4px;">8</span><span class="ln" style="top:205.4px;">9</span><span class="ln" style="top:227.4px;">10</span><span class="ln" style="top:249.4px;">11</span><span class="ln" style="top:271.4px;">12</span><span class="ln" style="top:293.4px;">13</span><span class="ln" style="top:315.4px;">14</span><span class="ln" style="top:337.4px;">15</span><span class="ln" style="top:359.4px;">16</span><span class="ln" style="top:381.4px;">17</span><span class="ln" style="top:403.4px;">18</span><span class="ln" style="top:425.4px;color:#a4a3a3;">19</span><span class="ln" style="top:447.4px;">20</span><span class="ln" style="top:469.4px;">21</span><span class="ln" style="top:491.4px;">22</span><span class="ln" style="top:513.4px;">23</span><span class="ln" style="top:535.4px;">24</span><span class="ln" style="top:557.4px;">25</span><span class="ln" style="top:579.4px;">26</span><span class="ln" style="top:601.4px;">27</span><span class="ln" style="top:623.4px;">28</span><span class="ln" style="top:645.4px;">29</span><span class="ln" style="top:667.4px;">30</span><span class="ln" style="top:689.4px;">31</span><span class="ln" style="top:711.4px;">32</span><span class="ln" style="top:733.4px;">33</span><span class="ln" style="top:755.4px;">34</span><span class="ln" style="top:777.4px;">35</span><span class="ln" style="top:799.4px;">36</span>
<svg style="left:29.5px;top:120.7px" width="10" height="12" viewBox="0 0 10 12"><path d="M1 .5 L9.5 6 L1 11.5 Z" fill="#499c54"/></svg><svg style="left:29.5px;top:142.7px" width="10" height="12" viewBox="0 0 10 12"><path d="M1 .5 L9.5 6 L1 11.5 Z" fill="#499c54"/></svg><svg style="left:52.5px;top:146.3px" width="10" height="11" viewBox="0 0 10 11"><path d="M.5 .5 H9.5 V6.5 L5 10.5 L.5 6.5 Z" fill="#2b2b2b" stroke="#626262" stroke-width="1"/><path d="M2.5 4 H7.5" stroke="#626262" stroke-width="1"/></svg><svg style="left:52.5px;top:190.3px" width="10" height="11" viewBox="0 0 10 11"><path d="M.5 .5 H9.5 V6.5 L5 10.5 L.5 6.5 Z" fill="#2b2b2b" stroke="#626262" stroke-width="1"/><path d="M2.5 4 H7.5" stroke="#626262" stroke-width="1"/></svg><svg style="left:52.5px;top:366.3px" width="10" height="11" viewBox="0 0 10 11"><path d="M.5 .5 H9.5 V6.5 L5 10.5 L.5 6.5 Z" fill="#2b2b2b" stroke="#626262" stroke-width="1"/><path d="M2.5 4 H7.5" stroke="#626262" stroke-width="1"/></svg><svg style="left:52.5px;top:388.3px" width="10" height="11" viewBox="0 0 10 11"><path d="M.5 .5 H9.5 V6.5 L5 10.5 L.5 6.5 Z" fill="#2b2b2b" stroke="#626262" stroke-width="1"/><path d="M2.5 4 H7.5" stroke="#626262" stroke-width="1"/></svg><svg style="left:52.5px;top:652.3px" width="10" height="11" viewBox="0 0 10 11"><path d="M.5 .5 H9.5 V6.5 L5 10.5 L.5 6.5 Z" fill="#2b2b2b" stroke="#626262" stroke-width="1"/><path d="M2.5 4 H7.5" stroke="#626262" stroke-width="1"/></svg><svg style="left:52.5px;top:230.8px" width="10" height="11" viewBox="0 0 10 11"><path d="M.5 10.5 H9.5 V4.5 L5 .5 L.5 4.5 Z" fill="#2b2b2b" stroke="#626262" stroke-width="1"/><path d="M2.5 7 H7.5" stroke="#626262" stroke-width="1"/></svg><svg style="left:52.5px;top:428.8px" width="10" height="11" viewBox="0 0 10 11"><path d="M.5 10.5 H9.5 V4.5 L5 .5 L.5 4.5 Z" fill="#2b2b2b" stroke="#626262" stroke-width="1"/><path d="M2.5 7 H7.5" stroke="#626262" stroke-width="1"/></svg><svg style="left:52.5px;top:472.8px" width="10" height="11" viewBox="0 0 10 11"><path d="M.5 10.5 H9.5 V4.5 L5 .5 L.5 4.5 Z" fill="#2b2b2b" stroke="#626262" stroke-width="1"/><path d="M2.5 7 H7.5" stroke="#626262" stroke-width="1"/></svg><svg style="left:52.5px;top:516.8px" width="10" height="11" viewBox="0 0 10 11"><path d="M.5 10.5 H9.5 V4.5 L5 .5 L.5 4.5 Z" fill="#2b2b2b" stroke="#626262" stroke-width="1"/><path d="M2.5 7 H7.5" stroke="#626262" stroke-width="1"/></svg><svg style="left:52.5px;top:560.8px" width="10" height="11" viewBox="0 0 10 11"><path d="M.5 10.5 H9.5 V4.5 L5 .5 L.5 4.5 Z" fill="#2b2b2b" stroke="#626262" stroke-width="1"/><path d="M2.5 7 H7.5" stroke="#626262" stroke-width="1"/></svg><svg style="left:52.5px;top:604.8px" width="10" height="11" viewBox="0 0 10 11"><path d="M.5 10.5 H9.5 V4.5 L5 .5 L.5 4.5 Z" fill="#2b2b2b" stroke="#626262" stroke-width="1"/><path d="M2.5 7 H7.5" stroke="#626262" stroke-width="1"/></svg><svg style="left:52.5px;top:692.8px" width="10" height="11" viewBox="0 0 10 11"><path d="M.5 10.5 H9.5 V4.5 L5 .5 L.5 4.5 Z" fill="#2b2b2b" stroke="#626262" stroke-width="1"/><path d="M2.5 7 H7.5" stroke="#626262" stroke-width="1"/></svg><svg style="left:52.5px;top:758.8px" width="10" height="11" viewBox="0 0 10 11"><path d="M.5 10.5 H9.5 V4.5 L5 .5 L.5 4.5 Z" fill="#2b2b2b" stroke="#626262" stroke-width="1"/><path d="M2.5 7 H7.5" stroke="#626262" stroke-width="1"/></svg>
<svg style="left:72px;top:425.1px" width="12" height="16" viewBox="0 0 12 16"><path d="M6 .5 A5.2 5.2 0 0 1 9 10 V11 H3 V10 A5.2 5.2 0 0 1 6 .5 Z" fill="#f2a830"/><path d="M3.4 12.3 H8.6 M4.3 14.2 H7.7" stroke="#9a9c9e" stroke-width="1.3"/></svg><div id="code"><div class="cl" style="top:0px"><span class="k">package </span>day11_SwitchScanner<span class="k">;</span></div>
<div class="cl" style="top:44px"><span class="c">import java.util.Scanner;</span></div>
<div class="cl" style="top:88px"><span class="k">public class </span>Browsers {</div>
<div class="cl" style="top:110px">    <span class="k">public static void </span><span class="m">main</span>(String[] args) {</div>
<div class="cl" style="top:154px">       <span class="c">/<span class="ast">*</span> Scanner input=new Scanner(System.in);</span></div>
<div class="cl" style="top:176px"><span class="c">        System.out.println("Browser name : ");</span></div>
<div class="cl" style="top:198px"><span class="c">        String browserName=input.nextLine(); <span class="ast">*</span>/</span></div>
<div class="cl" style="top:220px">        String browserName=<span class="s">"edge"</span><span class="k">;</span></div>
<div class="cl" style="top:242px">        String <span class="u">result</span>=<span class="s">""</span><span class="k">;</span></div>
<div class="cl" style="top:286px">        <span class="k">boolean </span>validBrowser = <span class="w">browserName == <span class="s">"chrome"</span></span> || <span class="w">browserName == <span class="s">"firefox"</span></span> || <span class="w">browserName == <span class="s">"opera"</span></span></div>
<div class="cl" style="top:308px">                || <span class="w">browserName == <span class="s">"safari"</span></span> || browserName <span class="w">==</span> <span class="s">"edge"</span><span class="k">;</span></div>
<div class="cl" style="top:330px">        <span class="k">if</span>(validBrowser){</div>
<div class="cl" style="top:352px">            <span class="w"><span class="k">if</span></span>(<span class="w">browserName == <span class="s">"chrome"</span></span>){</div>
<div class="cl" style="top:374px">                <span class="u">result</span>=<span class="s">"Chrome Browser is Selected"</span><span class="k">;</span></div>
<div class="cl" style="top:396px">            }<span class="k">else if </span>(<span class="w">browserName == <span class="s">"firefox"</span></span> )<span class="br">{</span></div>
<div class="cl" style="top:418px">                <span class="u">result</span>=<span class="s">"FireFox Browser is Selected"</span><span class="k">;</span></div>
<div class="cl" style="top:440px">            <span class="br">}</span><span class="k">else if </span>(<span class="w">browserName == <span class="s">"opera"</span></span>){</div>
<div class="cl" style="top:462px">                <span class="u">result</span>=<span class="s">"Opera Browser is Selected"</span><span class="k">;</span></div>
<div class="cl" style="top:484px">            }<span class="k">else if </span>(<span class="w">browserName == <span class="s">"safari"</span></span>){</div>
<div class="cl" style="top:506px">                <span class="u">result</span>=<span class="s">"Safari Browser is Selected"</span><span class="k">;</span></div>
<div class="cl" style="top:528px">            }<span class="k">else </span>{</div>
<div class="cl" style="top:550px">                <span class="u">result</span>=<span class="s">"Edge Browser is Selected"</span><span class="k">;</span></div>
<div class="cl" style="top:572px">            }</div>
<div class="cl" style="top:616px">        }<span class="k">else</span>{</div>
<div class="cl" style="top:638px">            <span class="u">result</span>=<span class="s">"Invalid Browser Name "</span><span class="k">;</span></div>
<div class="cl" style="top:660px">        }</div>
<div class="cl" style="top:682px">        System.<span class="f">out</span>.println(<span class="u">result</span>)<span class="k">;</span></div>
<div class="cl" style="top:726px">    }</div>
<div class="cl" style="top:748px">}</div>
</div>
<div class="abs" style="left:445.8px;top:425.8px;width:2px;height:17.8px;background:#bbbbbb"></div><svg style="left:118.3px;top:197.7px" width="16" height="4" viewBox="0 0 16 4"><path d="M0 3 L2 1 L4 3 L6 1 L8 3 L10 1 L12 3 L14 1 L16 3" fill="none" stroke="#8a8a3e" stroke-width="1"/></svg><svg style="left:1051.5px;top:34.2px" width="14" height="13" viewBox="0 0 14 13"><path d="M7 .5 L13.5 12.5 H.5 Z" fill="#d9a40f"/><path d="M7 4.5 V8.5 M7 9.8 V11.2" stroke="#2b2b2b" stroke-width="1.4"/></svg><span class="t" style="left:1068.5px;top:34.7px;-webkit-text-stroke:.18px;font-size:11.3px;line-height:14px">20</span><svg style="left:1088px;top:34.2px" width="14" height="13" viewBox="0 0 14 13"><path d="M7 .5 L13.5 12.5 H.5 Z" fill="#807253"/><path d="M7 4.5 V8.5 M7 9.8 V11.2" stroke="#2b2b2b" stroke-width="1.4"/></svg><span class="t" style="left:1104px;top:34.7px;-webkit-text-stroke:.18px;font-size:11.3px;line-height:14px">1</span><svg style="left:1119px;top:37.6px" width="10" height="7" viewBox="0 0 10 7"><path d="M1 5.6 L5 1.6 L9 5.6" fill="none" stroke="#bbbbbb" stroke-width="1.7"/></svg><svg style="left:1140px;top:37.6px" width="10" height="7" viewBox="0 0 10 7"><path d="M1 1.4 L5 5.4 L9 1.4" fill="none" stroke="#bbbbbb" stroke-width="1.7"/></svg><div class="abs" style="left:1147px;top:56.2px;width:7px;height:683.6px;background:#484848;border-radius:3.5px"></div><div class="abs" style="left:1142.7px;top:90.5px;width:14.2px;height:2.6px;background:#be9117"></div><div class="abs" style="left:1142.7px;top:185.2px;width:14.2px;height:2.6px;background:#6e6249"></div><div class="abs" style="left:1142.7px;top:261.2px;width:14.2px;height:2.6px;background:#be9117"></div><div class="abs" style="left:1142.7px;top:299.4px;width:14.2px;height:2.6px;background:#be9117"></div><div class="abs" style="left:1142.7px;top:317.5px;width:14.2px;height:2.6px;background:#be9117"></div><div class="abs" style="left:1142.7px;top:355.7px;width:14.2px;height:2.6px;background:#be9117"></div><div class="abs" style="left:1142.7px;top:393.4px;width:14.2px;height:2.6px;background:#be9117"></div><div class="abs" style="left:1142.7px;top:431.2px;width:14.2px;height:2.6px;background:#be9117"></div><div class="abs" style="left:1142.7px;top:469.5px;width:14.2px;height:2.6px;background:#be9117"></div></div>
<div id="bs"><svg style="left:30px;top:4.4px" width="11" height="14" viewBox="0 0 11 14"><path d="M2.2 1.2 V12.8 M8.6 3.4 C8.6 8 2.2 6.6 2.2 10.4" fill="none" stroke="#b6b8ba" stroke-width="1.6" stroke-linecap="round"/><circle cx="2.2" cy="1.9" r="1.6" fill="#b6b8ba"/><circle cx="2.2" cy="12.1" r="1.6" fill="#b6b8ba"/><circle cx="8.6" cy="3.6" r="1.6" fill="#b6b8ba"/></svg><span class="bt" style="left:46px">Git</span><svg style="left:81.7px;top:6.8px" width="10.2" height="8.8" viewBox="0 0 10.2 8.8"><g fill="#b6b8ba"><rect x="0" y="0" width="2.8" height="2.1"/><rect x="3.9" y="0" width="6.3" height="2.1"/><rect x="0" y="3.3" width="2.8" height="2.1"/><rect x="3.9" y="3.3" width="6.3" height="2.1"/><rect x="0" y="6.6" width="2.8" height="2.1"/><rect x="3.9" y="6.6" width="6.3" height="2.1"/></g></svg><span class="bt" style="left:97px">TODO</span><svg style="left:148px;top:4px" width="13" height="13" viewBox="0 0 13 13"><circle cx="6.5" cy="6.5" r="6" fill="#c4c6c8"/><path d="M6.5 3 V7.5 M6.5 9 V10.5" stroke="#3c3f41" stroke-width="1.6"/></svg><span class="bt" style="left:165px">Problems</span><svg style="left:233px;top:4px" width="14" height="14" viewBox="0 0 14 14"><path d="M11.5 6 A5 5 0 1 0 6.5 11.5" fill="none" stroke="#afb1b3" stroke-width="1.3"/><path d="M6.5 3.5 V6.8 L4.6 8.2" fill="none" stroke="#afb1b3" stroke-width="1.2"/><path d="M8 7 L13.5 10.3 L8 13.6 Z" fill="#afb1b3"/></svg><span class="bt" style="left:251px">Profiler</span><svg style="left:308px;top:6.2px" width="11.2" height="10" viewBox="0 0 11.2 10"><rect x="0" y="0" width="11.2" height="10" rx=".6" fill="#bcbec0"/><path d="M2 2.6 L4.6 5 L2 7.4 M5.6 7.6 H9.2" fill="none" stroke="#3c3f41" stroke-width="1.3"/></svg><span class="bt" style="left:325px">Terminal</span><svg style="left:386px;top:4px" width="15" height="14" viewBox="386 4 15 14"><path d="M387.8 11.2 L394 6.4" stroke="#afb1b3" stroke-width="2.7" fill="none"/><path d="M391.4 8.6 L399 16.2" stroke="#afb1b3" stroke-width="2.5" fill="none"/></svg><span class="bt" style="left:404.8px">Build</span><svg style="left:1341.6px;top:4px" width="14" height="14" viewBox="0 0 14 14"><path d="M12.5 12.5 V7 A5.5 5.5 0 1 0 7 12.5 Z" fill="none" stroke="#c4c6c8" stroke-width="1.5"/></svg><span class="bt" style="left:1359px">Event Log</span></div>
<div id="st"><svg style="left:5px;top:3px" width="13" height="13" viewBox="0 0 13 13"><rect x="3.5" y=".8" width="8.5" height="8.5" fill="none" stroke="#afb1b3" stroke-width="1.2"/><rect x=".8" y="3.5" width="8.5" height="8.5" fill="#3c3f41" stroke="#afb1b3" stroke-width="1.2"/></svg><span class="stt" style="left:1162.4px">19:50</span><span class="stt" style="left:1202.2px">LF</span><span class="stt" style="left:1226.1px">UTF-8</span><span class="stt" style="left:1271.4px">4 spaces</span><svg style="left:1330px;top:2.8px" width="11" height="15" viewBox="0 0 11 15"><path d="M2.2 1.2 V13.8 M9 2.2 C9 8.5 2.2 6.5 2.2 11" fill="none" stroke="#c0c2c4" stroke-width="1.8" stroke-linecap="round"/><circle cx="2.2" cy="1.8" r="1.5" fill="#c0c2c4"/><circle cx="2.2" cy="13.2" r="1.5" fill="#c0c2c4"/><circle cx="9" cy="2.4" r="1.5" fill="#c0c2c4"/></svg><span class="stt" style="left:1346px">master</span><svg style="left:1390.6px;top:3px" width="12" height="13" viewBox="0 0 12 13"><rect x="3" y="6" width="8.5" height="6.5" fill="#afb1b3"/><path d="M1 7 V4 A2.4 2.4 0 0 1 5.8 4 V6" fill="none" stroke="#afb1b3" stroke-width="1.3"/></svg><svg style="left:1413.5px;top:2px" width="16" height="15" viewBox="0 0 16 15"><path d="M1 6 A6 4.5 0 0 1 13 6 A3.5 3.5 0 0 1 10.5 11 H5 A4 4 0 0 1 1 6 Z" fill="#afb1b3"/><circle cx="12" cy="11" r="3.3" fill="#3c3f41"/><circle cx="12" cy="11" r="2.1" fill="none" stroke="#afb1b3" stroke-width="1.2"/><path d="M5 5 L8 8 M8 5 L5 8" stroke="#3c3f41" stroke-width="1"/></svg></div>
<div class="abs" style="left:0;top:28px;width:1440px;height:1px;background:#323232"></div>
</div>
</body></html>
